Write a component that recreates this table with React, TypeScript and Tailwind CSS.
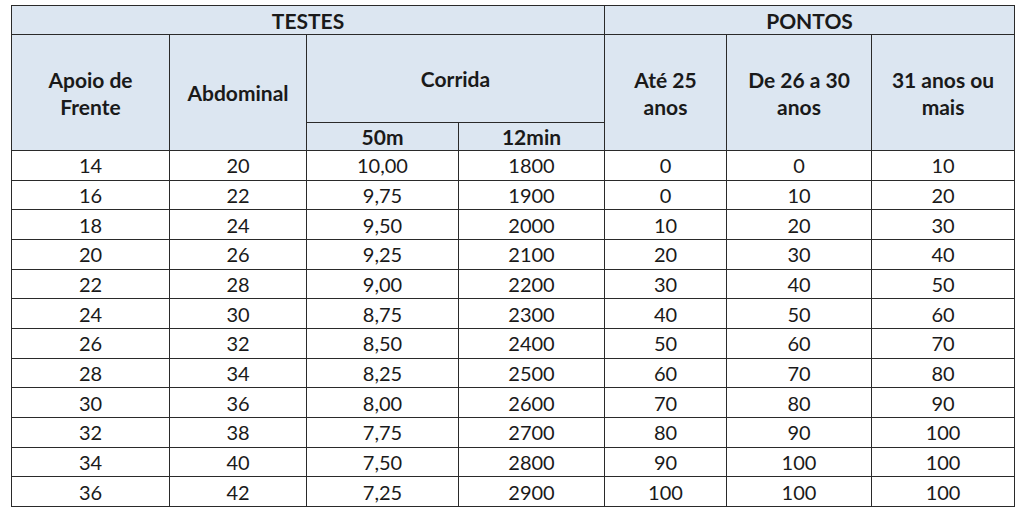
const rows: [number, number, string, number, number, number, number][] = [
  [14, 20, "10,00", 1800, 0, 0, 10],
  [16, 22, "9,75", 1900, 0, 10, 20],
  [18, 24, "9,50", 2000, 10, 20, 30],
  [20, 26, "9,25", 2100, 20, 30, 40],
  [22, 28, "9,00", 2200, 30, 40, 50],
  [24, 30, "8,75", 2300, 40, 50, 60],
  [26, 32, "8,50", 2400, 50, 60, 70],
  [28, 34, "8,25", 2500, 60, 70, 80],
  [30, 36, "8,00", 2600, 70, 80, 90],
  [32, 38, "7,75", 2700, 80, 90, 100],
  [34, 40, "7,50", 2800, 90, 100, 100],
  [36, 42, "7,25", 2900, 100, 100, 100],
];

const th = "border-[1.5px] border-[#2a2a2a] bg-[#dce6f1] font-bold text-[21px] leading-[27px] text-center align-middle p-0";
const td = "border-[1.5px] border-[#2a2a2a] text-center align-middle p-0 h-[29.67px]";

export default function App() {
  return (
    <div className="w-[1024px] h-[515px] bg-white pt-[5px] pl-[11px] text-[#1a1a1a] font-['Lato','Open_Sans',sans-serif] text-[20px] leading-[26px]">
      <table className="border-collapse table-fixed w-[1003px]">
        <colgroup>
          <col className="w-[158px]" />
          <col className="w-[137px]" />
          <col className="w-[152px]" />
          <col className="w-[146px]" />
          <col className="w-[122px]" />
          <col className="w-[145px]" />
          <col className="w-[143px]" />
        </colgroup>
        <thead>
          <tr className="h-[29px]">
            <th colSpan={4} className={th}>TESTES</th>
            <th colSpan={3} className={th}>PONTOS</th>
          </tr>
          <tr className="h-[88px]">
            <th rowSpan={2} className={th}>Apoio de<br />Frente</th>
            <th rowSpan={2} className={th}>Abdominal</th>
            <th colSpan={2} className={th}>Corrida</th>
            <th rowSpan={2} className={th}>Até 25<br />anos</th>
            <th rowSpan={2} className={th}>De 26 a 30<br />anos</th>
            <th rowSpan={2} className={th}>31 anos ou<br />mais</th>
          </tr>
          <tr className="h-[28px]">
            <th className={th}>50m</th>
            <th className={th}>12min</th>
          </tr>
        </thead>
        <tbody>
          {rows.map((r) => (
            <tr key={r[0]}>
              {r.map((v, i) => (
                <td key={i} className={td}>{v}</td>
              ))}
            </tr>
          ))}
        </tbody>
      </table>
    </div>
  );
}
